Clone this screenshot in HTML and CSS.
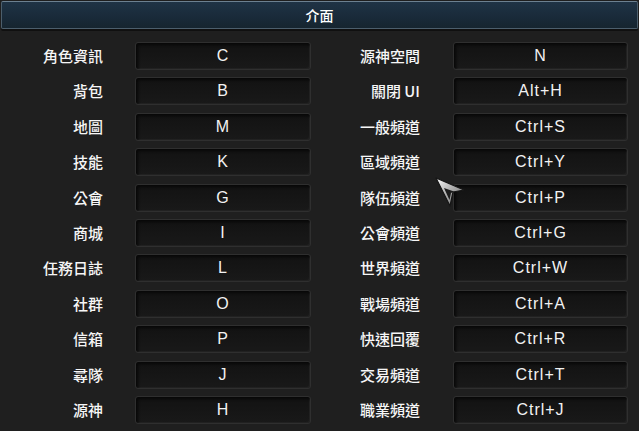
FILE: index.html
```html
<!DOCTYPE html>
<html lang="zh-Hant">
<head>
  <meta charset="UTF-8">
  <meta name="viewport" content="width=device-width, initial-scale=1.0">
  <link rel="stylesheet" href="styles.css">
  <title>介面</title>
</head>
<body>
  <div class="window">
    <div class="title-bar">介面</div>

    <div class="keys">
      <div class="label">角色資訊</div><div class="key">C</div>
      <div class="label">源神空間</div><div class="key">N</div>

      <div class="label">背包</div><div class="key">B</div>
      <div class="label">關閉 UI</div><div class="key">Alt+H</div>

      <div class="label">地圖</div><div class="key">M</div>
      <div class="label">一般頻道</div><div class="key">Ctrl+S</div>

      <div class="label">技能</div><div class="key">K</div>
      <div class="label">區域頻道</div><div class="key">Ctrl+Y</div>

      <div class="label">公會</div><div class="key">G</div>
      <div class="label">隊伍頻道</div><div class="key">Ctrl+P</div>

      <div class="label">商城</div><div class="key">I</div>
      <div class="label">公會頻道</div><div class="key">Ctrl+G</div>

      <div class="label">任務日誌</div><div class="key">L</div>
      <div class="label">世界頻道</div><div class="key">Ctrl+W</div>

      <div class="label">社群</div><div class="key">O</div>
      <div class="label">戰場頻道</div><div class="key">Ctrl+A</div>

      <div class="label">信箱</div><div class="key">P</div>
      <div class="label">快速回覆</div><div class="key">Ctrl+R</div>

      <div class="label">尋隊</div><div class="key">J</div>
      <div class="label">交易頻道</div><div class="key">Ctrl+T</div>

      <div class="label">源神</div><div class="key">H</div>
      <div class="label">職業頻道</div><div class="key">Ctrl+J</div>
    </div>

    <!-- mouse cursor -->
    <svg class="cursor" width="34" height="34" viewBox="0 0 34 34">
      <defs>
        <linearGradient id="steel" x1="0" y1="0" x2="1" y2="1">
          <stop offset="0" stop-color="#ffffff"/>
          <stop offset="0.45" stop-color="#b0b0b0"/>
          <stop offset="1" stop-color="#6a6a6a"/>
        </linearGradient>
      </defs>
      <path d="M2 2 L30 14 L19 16 L16 30 Z" fill="url(#steel)" stroke="#151515" stroke-width="1.2" stroke-linejoin="round"/>
      <path d="M10 12 L20 15.5 L17 17 L15.5 24 Z" fill="#1c1c1c"/>
    </svg>
  </div>
</body>
</html>
```

FILE: styles.css
```css
html, body {
  margin: 0;
  padding: 0;
}
body {
  width: 639px;
  height: 431px;
  overflow: hidden;
  background: #1e1e1e;
  font-family: "Noto Sans CJK TC", "Noto Sans", sans-serif;
  color: #f4f4f4;
}
.window {
  position: relative;
  height: 431px;
  background: #1f1f1f;
}
.title-bar {
  margin: 1px 1px 0 1px;
  height: 26px;
  line-height: 26px;
  text-align: center;
  font-size: 14px;
  font-weight: 500;
  color: #ffffff;
  background: linear-gradient(to bottom, #1f3345 0%, #192a39 60%, #16252f 100%);
  border: 1px solid #4c5e6c;
  border-top-color: #6c8090;
  border-radius: 2px;
  box-shadow: 0 2px 0 #101010;
}
.keys {
  display: grid;
  grid-template-columns: 135px 176px 142px 175px;
  grid-auto-rows: 28px;
  row-gap: 7.4px;
  padding-top: 13px;
}
.label {
  text-align: right;
  line-height: 28px;
  font-size: 15px;
  font-weight: 500;
  color: #f6f6f6;
  padding-right: 32px;
}
.keys .label:nth-child(4n+3) {
  padding-right: 33px;
}
.key {
  box-sizing: border-box;
  height: 28px;
  line-height: 26px;
  text-align: center;
  font-family: "Liberation Sans", "DejaVu Sans", sans-serif;
  font-size: 16px;
  letter-spacing: 1px;
  color: #f2f2f2;
  background: linear-gradient(to bottom, #121212, #191919);
  border: 1px solid #2f2f2f;
  border-radius: 3px;
  box-shadow: inset 2px 2px 3px #080808, inset -1px -1px 1px #252525;
}
.cursor {
  position: absolute;
  left: 434px;
  top: 175px;
}
```
